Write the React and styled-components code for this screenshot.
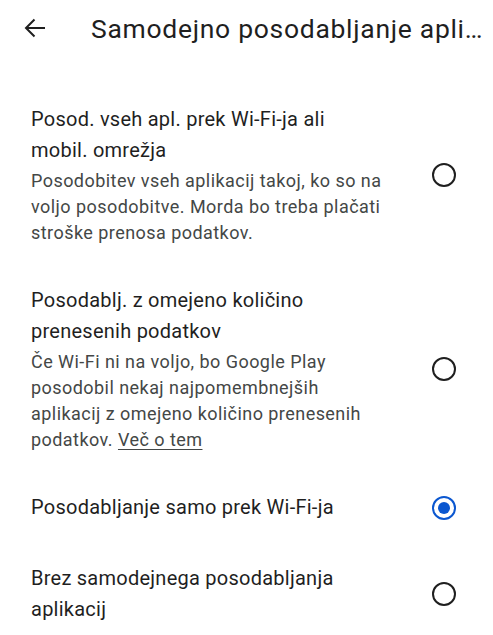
import styled, { createGlobalStyle } from "styled-components";

const Global = createGlobalStyle`
  html, body {
    margin: 0;
    padding: 0;
    background: #fff;
  }
  body {
    font-family: Roboto, "Noto Sans", "Liberation Sans", sans-serif;
    color: #1f1f1f;
  }
`;

const Page = styled.div`
  width: 493px;
  min-height: 635px;
  background: #fff;
`;

const Header = styled.header`
  height: 56px;
  display: flex;
  align-items: center;
  padding-left: 22px;
`;

const BackButton = styled.button`
  width: 26px;
  height: 26px;
  padding: 0;
  border: none;
  background: none;
  display: flex;
  align-items: center;
  justify-content: center;
  color: #1f1f1f;
  margin-right: 43px;
`;

const Title = styled.h1`
  margin: 0;
  font-size: 26.5px;
  font-weight: 400;
  white-space: nowrap;
  letter-spacing: 0.7px;
`;

const List = styled.div`
  padding-top: 28px;
  display: flex;
  flex-direction: column;
`;

const Option = styled.label`
  display: flex;
  align-items: center;
  padding: 19.7px 37px 19.7px 31px;
  cursor: pointer;
`;

const TextCol = styled.div`
  flex: 1;
  max-width: 352px;
  margin-right: auto;
`;

const OptionTitle = styled.div`
  font-size: 20px;
  line-height: 31px;
  letter-spacing: 0.25px;
  color: #1f1f1f;
`;

const OptionDesc = styled.div`
  font-size: 18px;
  line-height: 26px;
  letter-spacing: 0.45px;
  color: #444746;
  margin-top: 2px;

  a {
    color: inherit;
    text-decoration: underline;
    text-underline-offset: 3px;
  }
`;

const Radio = styled.span`
  flex: none;
  width: 24px;
  height: 24px;
  box-sizing: border-box;
  border-radius: 50%;
  border: 2.5px solid ${(p) => (p.$checked ? "#0b57d0" : "#1f1f1f")};
  display: flex;
  align-items: center;
  justify-content: center;

  &::after {
    content: "";
    width: 12px;
    height: 12px;
    border-radius: 50%;
    background: #0b57d0;
    display: ${(p) => (p.$checked ? "block" : "none")};
  }
`;

const options = [
  {
    title: "Posod. vseh apl. prek Wi-Fi-ja ali mobil. omrežja",
    desc: "Posodobitev vseh aplikacij takoj, ko so na voljo posodobitve. Morda bo treba plačati stroške prenosa podatkov.",
  },
  {
    title: "Posodablj. z omejeno količino prenesenih podatkov",
    desc: "Če Wi-Fi ni na voljo, bo Google Play posodobil nekaj najpomembnejših aplikacij z omejeno količino prenesenih podatkov.",
    link: "Več o tem",
  },
  { title: "Posodabljanje samo prek Wi-Fi-ja", checked: true },
  { title: "Brez samodejnega posodabljanja aplikacij" },
];

export default function App() {
  return (
    <Page>
      <Global />
      <Header>
        <BackButton aria-label="Nazaj">
          <svg width="22" height="20" viewBox="0 0 22 20" fill="none">
            <path
              d="M21 10H2.5M10.5 1.5L2 10l8.5 8.5"
              stroke="currentColor"
              strokeWidth="2"
            />
          </svg>
        </BackButton>
        <Title>Samodejno posodabljanje apli…</Title>
      </Header>
      <List>
        {options.map((o, i) => (
          <Option key={i}>
            <TextCol>
              <OptionTitle>{o.title}</OptionTitle>
              {o.desc && (
                <OptionDesc>
                  {o.desc}
                  {o.link && (
                    <>
                      {" "}
                      <a href="#">{o.link}</a>
                    </>
                  )}
                </OptionDesc>
              )}
            </TextCol>
            <Radio $checked={o.checked} />
          </Option>
        ))}
      </List>
    </Page>
  );
}
